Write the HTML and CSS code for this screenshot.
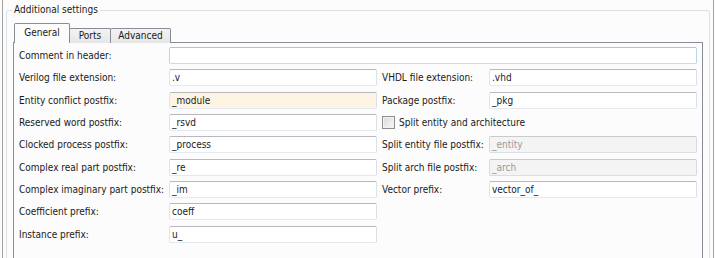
FILE: index.html
```html
<!DOCTYPE html>
<html>
<head>
<meta charset="utf-8">
<link rel="stylesheet" href="styles.css">
</head>
<body>
<div class="window">
  <fieldset class="group">
    <legend class="group-title">Additional settings</legend>
    <div class="tabs">
      <div class="tab tab-active tab-general">General</div>
      <div class="tab tab-ports">Ports</div>
      <div class="tab tab-advanced">Advanced</div>
    </div>
    <div class="panel">
      <div class="form">
        <span class="lbl">Comment in header:</span>
        <div class="field field-wide field-focus"></div>

        <span class="lbl">Verilog file extension:</span>
        <div class="field">.v</div>
        <span class="lbl lbl-right">VHDL file extension:</span>
        <div class="field">.vhd</div>

        <span class="lbl">Entity conflict postfix:</span>
        <div class="field field-warn">_module</div>
        <span class="lbl lbl-right">Package postfix:</span>
        <div class="field">_pkg</div>

        <span class="lbl">Reserved word postfix:</span>
        <div class="field">_rsvd</div>
        <div class="check-row">
          <span class="checkbox"></span>
          <span class="check-label">Split entity and architecture</span>
        </div>

        <span class="lbl">Clocked process postfix:</span>
        <div class="field">_process</div>
        <span class="lbl lbl-right">Split entity file postfix:</span>
        <div class="field field-disabled">_entity</div>

        <span class="lbl">Complex real part postfix:</span>
        <div class="field">_re</div>
        <span class="lbl lbl-right">Split arch file postfix:</span>
        <div class="field field-disabled">_arch</div>

        <span class="lbl">Complex imaginary part postfix:</span>
        <div class="field">_im</div>
        <span class="lbl lbl-right">Vector prefix:</span>
        <div class="field">vector_of_</div>

        <span class="lbl">Coefficient prefix:</span>
        <div class="field">coeff</div>
        <span class="spacer"></span>

        <span class="lbl">Instance prefix:</span>
        <div class="field">u_</div>
        <span class="spacer"></span>
      </div>
    </div>
  </fieldset>
</div>
</body>
</html>
```

FILE: styles.css
```css
html, body {
  margin: 0;
  padding: 0;
  background: #fcfcfc;
  overflow: hidden;
}

body {
  width: 715px;
  height: 258px;
  font-family: "DejaVu Sans Condensed", "Liberation Sans", sans-serif;
  font-size: 10px;
  color: #1a1a1a;
}

.window {
  margin-left: 2px;
  width: 712px;
  height: 258px;
  box-sizing: border-box;
  border-left: 1px solid #a3a3a3;
  border-right: 1px solid #a3a3a3;
  padding-top: 3px;
  background: #fcfcfc;
}

.group {
  margin: 0 3px;
  padding: 6px 6px 0 6px;
  border: 1px solid #dce3e7;
  border-bottom: none;
  border-radius: 3px 3px 0 0;
  height: 255px;
  box-sizing: border-box;
  min-width: 0;
  display: flex;
  flex-direction: column;
}

.group-title {
  padding: 0 2px;
  margin-left: -1px;
  font-size: 10px;
  line-height: 14px;
  color: #1a1a1a;
}

.tabs {
  display: flex;
  align-items: flex-end;
  margin-left: 1px;
  height: 20px;
  flex: none;
  margin-bottom: -1px;
  position: relative;
  z-index: 1;
}

.tab {
  box-sizing: border-box;
  border: 1px solid #898c95;
  border-bottom: none;
  height: 15px;
  line-height: 13px;
  text-align: center;
  background: linear-gradient(#f3f3f3, #e6e6e6);
  border-radius: 2px 2px 0 0;
  color: #1a1a1a;
}

.tab-active {
  height: 20px;
  line-height: 18px;
  background: #fcfcfc;
  position: relative;
  z-index: 2;
}

.tab-general { width: 56px; }
.tab-ports { width: 42px; margin-left: -1px; }
.tab-advanced { width: 61px; margin-left: -1px; }

.panel {
  flex: 1;
  border: 1px solid #898c95;
  border-bottom: none;
  background: #fcfcfc;
  padding: 4px 0 0 0;
  box-sizing: border-box;
}

.form {
  display: grid;
  grid-template-columns: 150px 208px 112px 208px;
  grid-auto-rows: 17px;
  row-gap: 5.33px;
  padding-left: 5px;
  align-items: center;
}

.lbl {
  white-space: nowrap;
  line-height: 17px;
}

.lbl-right {
  padding-left: 5px;
}

.field {
  box-sizing: border-box;
  height: 17px;
  width: 208px;
  padding: 0 2px;
  border: 1px solid;
  border-color: #b7b9bf #dbdfe6 #e3e9ef #e2e3ea;
  border-radius: 2px;
  background: #ffffff;
  line-height: 15px;
  white-space: nowrap;
  overflow: hidden;
  color: #1a1a1a;
}

.field-wide {
  grid-column: 2 / 5;
  width: 528px;
}

.field-focus {
  border-color: #a3c6e6 #b8d5ee #c5ddf1 #b8d5ee;
}

.field-warn {
  background: #fdf4e4;
}

.field-disabled {
  background: #f4f4f4;
  border-color: #c9cacc #d9dadc #dcdddf #d9dadc;
  color: #9a9a9a;
}

.check-row {
  grid-column: 3 / 5;
  display: flex;
  align-items: center;
  padding-left: 5px;
  gap: 4px;
}

.checkbox {
  width: 13px;
  height: 13px;
  box-sizing: border-box;
  border: 1px solid #8f8f8f;
  background: linear-gradient(135deg, #d9d9d9, #f9f9f9);
  box-shadow: inset 0 0 0 1px #f2f2f2;
}

.check-label {
  white-space: nowrap;
}

.spacer {
  grid-column: 3 / 5;
}
```
